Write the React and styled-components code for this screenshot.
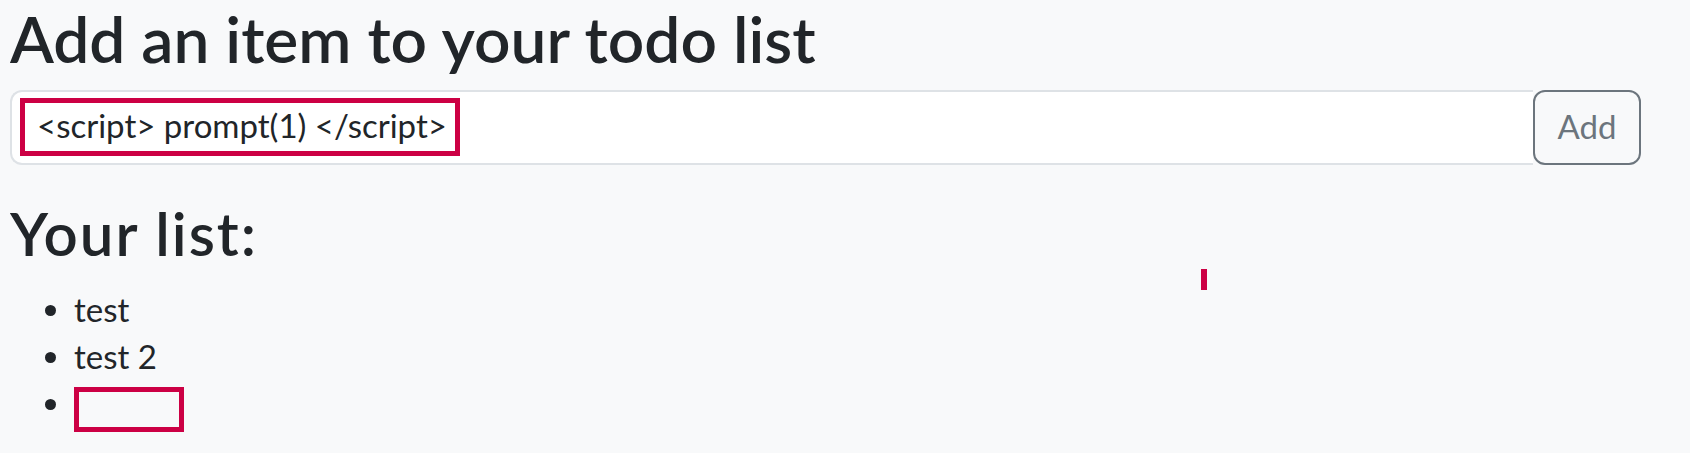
import React from 'react'
import styled, { createGlobalStyle } from 'styled-components'

const GlobalStyle = createGlobalStyle`
	html, body {
		margin: 0;
		padding: 0;
		background: #f8f9fa;
	}
	body {
		font-family: Lato, "Open Sans", sans-serif;
		color: #212529;
	}
`

const Page = styled.div`
	position: relative;
	padding: 0 49px 0 10px;
	min-height: 453px;
	box-sizing: border-box;
`

const Title = styled.h1`
	font-size: 64px;
	font-weight: 600;
	line-height: 77px;
	margin: 0 0 13px 0;
	white-space: nowrap;
`

const InputGroup = styled.form`
	position: relative;
	display: flex;
	height: 75px;
`

const TextInput = styled.input`
	flex: 1;
	min-width: 0;
	box-sizing: border-box;
	height: 100%;
	margin: 0;
	padding: 0 24px 6px 25px;
	border: 2px solid #dee2e6;
	border-right: none;
	border-radius: 12px 0 0 12px;
	background: #ffffff;
	font-family: inherit;
	font-size: 33px;
	color: #212529;
	outline: none;
`

const AddButton = styled.button`
	width: 108px;
	box-sizing: border-box;
	margin: 0;
	border: 2px solid #6c757d;
	border-radius: 12px;
	background: transparent;
	color: #6c757d;
	font-family: inherit;
	font-size: 33px;
	padding: 0 0 4px 0;
	cursor: pointer;
`

const Highlight = styled.div`
	position: absolute;
	left: ${p => p.left}px;
	top: ${p => p.top}px;
	width: ${p => p.width}px;
	height: ${p => p.height}px;
	box-sizing: border-box;
	border: 5px solid #cc0044;
	pointer-events: none;
`

const SubTitle = styled.h2`
	font-size: 60px;
	font-weight: 600;
	line-height: 72px;
	letter-spacing: 2px;
	margin: 32px 0 17px 0;
`

const List = styled.ul`
	margin: 0;
	padding-left: 64px;
	font-size: 33px;
	line-height: 47px;
`

const Item = styled.li``

const EmptyEntry = styled.span`
	display: inline-block;
	width: 110px;
	height: 45px;
	box-sizing: border-box;
	border: 5px solid #cc0044;
	vertical-align: -16px;
`

const Marker = styled.div`
	position: absolute;
	left: 1201px;
	top: 269px;
	width: 6px;
	height: 21px;
	background: #cc0044;
`

export default function App() {
	const items = ['test', 'test 2']
	return (
		<>
			<GlobalStyle />
			<Page>
				<Title>Add an item to your todo list</Title>
				<InputGroup onSubmit={e => e.preventDefault()}>
					<TextInput type="text" defaultValue="<script> prompt(1) </script>" />
					<AddButton type="submit">Add</AddButton>
					<Highlight left={10} top={8} width={440} height={58} />
				</InputGroup>
				<SubTitle>Your list:</SubTitle>
				<List>
					{items.map((item, i) => <Item key={i}>{item}</Item>)}
					<Item><EmptyEntry /></Item>
				</List>
				<Marker />
			</Page>
		</>
	)
}
